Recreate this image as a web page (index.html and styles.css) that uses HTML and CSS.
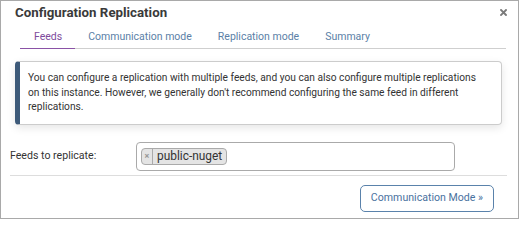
FILE: index.html
```html
<!DOCTYPE html>
<html>
<head>
<meta charset="utf-8">
<link rel="stylesheet" href="styles.css">
</head>
<body>
<div class="modal">
  <div class="modal-header">
    <h1 class="title">Configuration Replication</h1>
    <span class="close" aria-label="Close"><svg width="7" height="7" viewBox="0 0 7 7"><path d="M1 1 L6 6 M6 1 L1 6" stroke="#7a7a7a" stroke-width="1.9" stroke-linecap="square"/></svg></span>
  </div>
  <ul class="tabs">
    <li class="tab active"><a>Feeds</a></li>
    <li class="tab"><a>Communication mode</a></li>
    <li class="tab"><a>Replication mode</a></li>
    <li class="tab"><a>Summary</a></li>
  </ul>
  <div class="modal-body">
    <div class="info">You can configure a replication with multiple feeds, and you can also configure multiple replications on this instance. However, we generally don't recommend configuring the same feed in different replications.</div>
    <div class="form-row">
      <label class="label">Feeds to replicate:</label>
      <div class="select">
        <span class="tag"><span class="tag-x">×</span><span class="tag-text">public-nuget</span></span>
      </div>
    </div>
    <hr class="divider">
    <div class="footer">
      <button class="btn">Communication Mode »</button>
    </div>
  </div>
</div>
</body>
</html>
```
FILE: styles.css
```css
html, body {
  margin: 0;
  padding: 0;
  background: #ffffff;
}
body {
  font-family: Roboto, "Liberation Sans", sans-serif;
  color: #333333;
}
.modal {
  box-sizing: border-box;
  width: 519px;
  height: 219px;
  border: 1px solid #a9a9a9;
  background: #ffffff;
}
.modal-header {
  display: flex;
  justify-content: space-between;
  align-items: flex-start;
  padding: 4px 11px 0 14px;
}
.title {
  margin: 0;
  font-size: 13.3px;
  line-height: 16px;
  font-weight: 700;
  color: #3a3a3a;
}
.close {
  display: block;
  width: 7px;
  height: 7px;
  margin-top: 4px;
}
.close svg {
  display: block;
}
.tabs {
  list-style: none;
  margin: 0 12px 0 19px;
  padding: 0;
  display: flex;
  border-bottom: 1px solid #cfcfcf;
}
.tab {
  margin-bottom: -1px;
}
.tab a {
  display: block;
  padding: 8px 13px 4px;
  font-size: 10.5px;
  line-height: 15px;
  color: #5b7fa7;
  border-bottom: 1px solid transparent;
}
.tab.active a {
  padding-left: 14px;
  color: #7e4b9c;
  border-bottom-color: #8a52a6;
}
.modal-body {
  padding: 0 11px 0 9px;
}
.info {
  margin: 12px 5px 0 5px;
  padding: 9px 18px 9px 8px;
  border: 1px solid #cccccc;
  border-left: 5px solid #3d5a79;
  border-radius: 4px;
  box-shadow: 0 3px 8px rgba(0, 0, 0, 0.10);
  font-size: 10.2px;
  line-height: 14.5px;
  color: #333333;
}
.form-row {
  display: flex;
  align-items: center;
  margin-top: 17px;
}
.label {
  width: 126px;
  font-size: 10.6px;
  line-height: 12px;
  color: #333333;
}
.select {
  box-sizing: border-box;
  width: 319px;
  height: 29px;
  border: 1px solid #aaaaaa;
  border-radius: 4px;
  padding: 5px 4px;
  line-height: 17px;
}
.tag {
  display: inline-flex;
  align-items: stretch;
  vertical-align: top;
  height: 17px;
  box-sizing: border-box;
  border: 1px solid #aaaaaa;
  border-radius: 4px;
  background: #e4e4e4;
}
.tag-x {
  width: 10px;
  border-right: 1px solid #aaaaaa;
  color: #999999;
  font-size: 9px;
  font-weight: 700;
  line-height: 15px;
  text-align: center;
}
.tag-text {
  padding: 0 4px 0 4px;
  font-size: 11.9px;
  line-height: 15px;
  color: #333333;
}
.divider {
  margin: 4px 0 0 0;
  border: 0;
  border-top: 1px solid #dddddd;
  height: 0;
}
.footer {
  display: flex;
  justify-content: flex-end;
  padding: 9px 13px 0 0;
}
.btn {
  font-family: Roboto, "Liberation Sans", sans-serif;
  font-size: 10.6px;
  line-height: 14px;
  height: 27px;
  padding: 0 10px;
  color: #4a72a0;
  background: #ffffff;
  border: 1px solid #5a82ab;
  border-radius: 5px;
}
```
